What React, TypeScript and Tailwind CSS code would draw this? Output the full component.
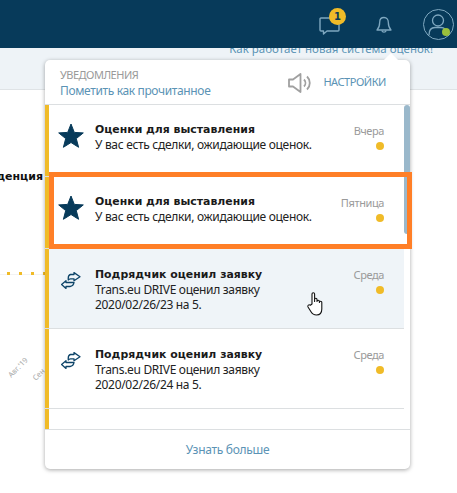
const ITEMS = [
  { kind: "star", title: "Оценки для выставления", text: ["У вас есть сделки, ожидающие оценок."], day: "Вчера", h: "h-[72px]" },
  { kind: "star", title: "Оценки для выставления", text: ["У вас есть сделки, ожидающие оценок."], day: "Пятница", h: "h-[72px]" },
  { kind: "swap", title: "Подрядчик оценил заявку", text: ["Trans.eu DRIVE оценил заявку", "2020/02/26/23 на 5."], day: "Среда", h: "h-[80px]", hover: true },
  { kind: "swap", title: "Подрядчик оценил заявку", text: ["Trans.eu DRIVE оценил заявку", "2020/02/26/24 на 5."], day: "Среда", h: "h-[80px]" },
  { kind: "swap", title: "Подрядчик оценил заявку", text: ["Trans.eu DRIVE оценил заявку", "2020/02/26/25 на 5."], day: "Среда", h: "h-[80px]" },
];

function Star() {
  return (
    <svg viewBox="0 0 26 26" className="mt-[18px] h-[26px] w-[26px]">
      <path
        d="M13 1l3.300 8.400 9 .5-7 5.700 2.300 8.700L13 19.500l-7.600 4.800 2.300-8.700-7-5.700 9-.5z"
        fill="#073a5a"
        stroke="#073a5a"
        strokeLinejoin="round"
      />
    </svg>
  );
}

function Swap() {
  return (
    <svg viewBox="0 0 20 17" className="mt-[23px] h-[17px] w-[20px]" fill="none" stroke="#0d4468" strokeWidth="1.300" strokeLinejoin="round">
      <path d="M13 .6L19 4.700 13 8.700V6.800H9.500Q8 6.800 7.300 8 6.800 3 9.500 2.500H13z" />
      <path d="M5 8.700L.6 12.500 5 16.400v-1.900h4Q12.500 14 13 10.500H5z" />
    </svg>
  );
}

export default function App() {
  return (
    <div className="relative h-[493px] w-[457px] overflow-hidden bg-white font-['Noto_Sans','DejaVu_Sans',sans-serif]">
      <header className="relative z-10 flex h-[48px] items-center justify-end bg-[#073a5a] pr-[3px]">
        <div className="relative mr-[36px] mt-[4px]">
          <svg viewBox="0 0 21 18" className="h-[18px] w-[21px]" fill="none" stroke="#7fa8c0" strokeWidth="1.4" strokeLinejoin="round">
            <path d="M2 1h17a1 1 0 0 1 1 1v11a1 1 0 0 1-1 1H8l-3.500 3v-3H2a1 1 0 0 1-1-1V2a1 1 0 0 1 1-1z" />
          </svg>
          <span className="absolute -top-[9px] left-[10px] flex h-[17px] w-[17px] items-center justify-center rounded-full bg-[#f0bb28] font-['DejaVu_Sans'] text-[10px] font-bold text-[#073a5a]">
            1
          </span>
        </div>
        <svg viewBox="0 0 16 18" className="mr-[31px] mt-[1px] h-[18px] w-[16px]" fill="none" stroke="#7fa8c0" strokeWidth="1.3" strokeLinejoin="round">
          <path d="M8 1.500c-2.800 0-4.300 2-4.300 4.800 0 3.500-.7 5.700-2.700 7.700h14c-2-2-2.700-4.200-2.700-7.700C12.300 3.500 10.800 1.500 8 1.500z" />
          <path d="M5.800 14.500a2.300 2.300 0 0 0 4.400 0" />
        </svg>
        <div className="relative h-[31px] w-[31px] rounded-full border border-[#7fa8c0]">
          <svg viewBox="0 0 29 29" className="h-full w-full" fill="none" stroke="#7fa8c0" strokeWidth="1.300">
            <circle cx="14" cy="10.500" r="5.500" />
            <path d="M5 25c0-5 2.500-7.500 6-7.500h6c2 0 3 .5 4 1.500" />
          </svg>
          <span className="absolute bottom-[3px] right-[3px] h-[8px] w-[8px] rounded-full bg-[#9bc13c]" />
        </div>
      </header>

      <div className="flex h-[42px] justify-end border-b border-[#dfe3e6] bg-[#eef3f7] pr-[24px]">
        <span className="-mt-[7px] text-[11.5px] leading-[16px] text-[#5b93b5]">Как работает новая система оценок!</span>
      </div>

      <div className="absolute left-0 top-[170px] w-[43px] overflow-hidden font-['DejaVu_Sans'] text-[11px] font-bold leading-[13px] text-[#111]">
        <span className="float-right whitespace-nowrap">денция</span>
      </div>
      <div className="absolute left-0 top-[274px] h-px w-[45px] bg-[#f3f3f3]" />
      <div className="absolute left-[7px] top-[272px] flex gap-[9px]">
        <span className="h-[3px] w-[3px] bg-[#f0bb28]" />
        <span className="h-[3px] w-[3px] bg-[#f0bb28]" />
        <span className="h-[3px] w-[3px] bg-[#f0bb28]" />
        <span className="h-[3px] w-[2px] bg-[#f0bb28]" />
      </div>
      <span className="absolute left-[6px] top-[362px] -rotate-45 text-[7.5px] text-[#aaa]">Авг.'19</span>
      <span className="absolute left-[32px] top-[369px] -rotate-45 text-[7.5px] text-[#aaa]">Сен</span>

      <div className="absolute left-[45px] top-[60px] flex h-[409px] w-[365px] flex-col rounded-[5px] bg-white shadow-[0_1px_4px_rgba(0,0,0,0.35)]">
        <span className="absolute -top-[5px] right-[14px] h-[10px] w-[10px] rotate-45 bg-white" />
        <div className="relative flex h-[45px] shrink-0 items-center justify-between border-b border-[#dcdfe1] pl-[15px] pr-[24px] pt-[1px]">
          <div>
            <div className="text-[11px] leading-[15px] tracking-[-0.5px] text-[#9a9a9a]">УВЕДОМЛЕНИЯ</div>
            <div className="mt-[1px] text-[12px] leading-[16px] tracking-[-0.36px] text-[#5b93b5]">Пометить как прочитанное</div>
          </div>
          <div className="flex items-center gap-[11px]">
            <svg viewBox="0 0 24 20" className="h-[20px] w-[24px]" fill="none" stroke="#a0a0a0" strokeWidth="1.800" strokeLinejoin="round">
              <path d="M12.500 1L5 6.500H1v7h4L12.500 19z" />
              <path d="M16 6.500a5 5 0 0 1 0 7M19 3.500a9 9 0 0 1 0 13" />
            </svg>
            <span className="text-[11px] tracking-[-0.45px] text-[#5b93b5]">НАСТРОЙКИ</span>
          </div>
        </div>

        <div className="relative min-h-0 flex-1 overflow-hidden">
          {ITEMS.map((it, i) => (
            <div key={i} className={`mr-[6px] flex ${it.h} items-stretch border-b border-[#dcdfe1] ${it.hover ? "bg-[#eff4f8]" : "bg-white"}`}>
              <div className="w-[4px] shrink-0 bg-[#f0bb28]" />
              <div className="flex w-[46px] shrink-0 items-start justify-center pr-[3px]">
                {it.kind === "star" ? <Star /> : <Swap />}
              </div>
              <div className={`min-w-0 flex-1 ${it.kind === "star" ? "pt-[17px]" : "pt-[18px]"}`}>
                <div className="font-['DejaVu_Sans'] text-[10.9px] font-bold leading-[15px] text-[#1a1a1a]">{it.title}</div>
                {it.text.map((t) => (
                  <div key={t} className="text-[12px] leading-[15px] tracking-[-0.31px] text-[#222]">
                    {t}
                  </div>
                ))}
              </div>
              <div className="flex shrink-0 flex-col items-end pr-[20px] pt-[19px]">
                <span className="text-[11px] leading-[14px] tracking-[-0.4px] text-[#9a9a9a]">{it.day}</span>
                <span className="mt-[4px] h-[8px] w-[8px] rounded-full bg-[#f0bb28]" />
              </div>
            </div>
          ))}
          <div className="absolute right-0 top-0 h-[129px] w-[6px] rounded-[3px] bg-[#9ab8cb]" />
        </div>

        <div className="flex h-[40px] shrink-0 items-center justify-center border-t border-[#dcdfe1] text-[12px] tracking-[-0.3px] text-[#5b93b5]">
          Узнать больше
        </div>
      </div>

      <div className="absolute left-[49px] top-[172px] h-[77px] w-[363px] border-[5px] border-[#ff7f27]" />

      <svg viewBox="0 0 20 26" className="absolute left-[306px] top-[291px] h-[26px] w-[20px]" fill="#fff" stroke="#111" strokeWidth="1.100" strokeLinejoin="round">
        <path d="M6 13V3a1.300 1.300 0 0 1 2.600 0v7.500V8.500a1.200 1.200 0 0 1 2.400 0v2a1.200 1.200 0 0 1 2.400 0v1a1.200 1.200 0 0 1 2.400 0V18c0 3.500-2 6-5.300 6-3 0-4.300-1-5.500-3.200L2 16c-.8-1.500 1-3 2.300-1.700z" />
      </svg>
    </div>
  );
}
